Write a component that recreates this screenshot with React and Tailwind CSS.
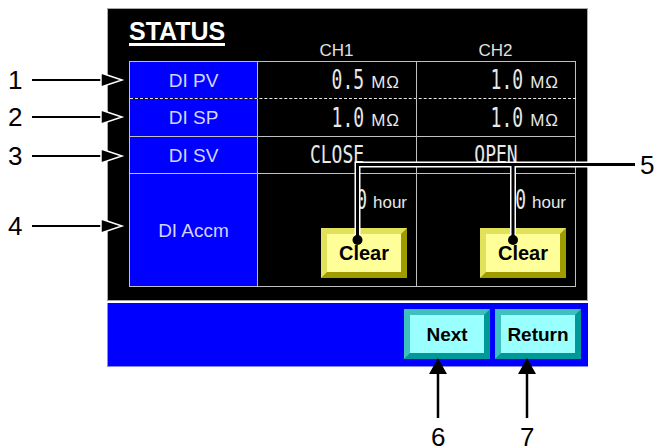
import React from "react";

const mono = "font-['DejaVu_Sans_Mono','Liberation_Mono',monospace]";

function Value({ v }) {
  return (
    <div className="flex items-end">
      <span className={`inline-block scale-y-150 ${mono} text-[18px] leading-[18px] text-[#e8e8e8]`}>{v}</span>
      <span className="ml-[7px] text-[17px] leading-[12px] tracking-[1px] text-[#e8e8e8]">MΩ</span>
    </div>
  );
}

function YellowBtn() {
  return (
    <div className="w-[86px] h-[50px] border-[6px] border-t-[#e2e25a] border-l-[#e2e25a] border-b-[#a09c00] border-r-[#a09c00] bg-[#ffff99] flex items-center justify-center">
      <span className="text-[20px] leading-none font-bold text-black">Clear</span>
    </div>
  );
}

function CyanBtn({ label }) {
  return (
    <div className="w-[86px] h-[50px] border-[6px] border-t-[#3ec0c0] border-l-[#3ec0c0] border-b-[#009999] border-r-[#009999] bg-[#99ffff] flex items-center justify-center">
      <span className="text-[19px] leading-none font-bold text-black">{label}</span>
    </div>
  );
}

function Label({ children }) {
  return (
    <div className="w-[128px] border-r border-[#c0c0c0] bg-[#0000ff] flex items-center justify-center text-[19px] leading-none text-[#d4d4ff]">
      {children}
    </div>
  );
}

function Accm() {
  return (
    <div className="w-[159px] border-r border-[#c0c0c0] flex flex-col items-end pr-[9px] pt-[17px]">
      <div className="flex items-end">
        <span className={`inline-block scale-y-150 ${mono} text-[18px] leading-[18px] text-[#e8e8e8]`}>0</span>
        <span className="ml-[6px] text-[17px] leading-[12px] text-[#e8e8e8]">hour</span>
      </div>
      <div className="mt-[19px]">
        <YellowBtn />
      </div>
    </div>
  );
}

export default function App() {
  return (
    <div className="relative w-[658px] h-[448px] bg-white overflow-hidden font-['Liberation_Sans',Arial,sans-serif]">
      <div className="pl-[107px] pt-[8px]">
        <div className="w-[481px] h-[293px] bg-black border border-[#a8a8a8] pl-[21px] pt-[11px]">
          <div className="flex h-[41px]">
            <div className="w-[128px]">
              <div className="w-fit text-white font-bold text-[25px] leading-[23px] border-b-[3px] border-white">STATUS</div>
            </div>
            <div className="w-[159px] flex items-end justify-center pb-[2px] text-[17px] leading-[17px] text-[#e0e0e0]">CH1</div>
            <div className="w-[159px] flex items-end justify-center pb-[2px] text-[17px] leading-[17px] text-[#e0e0e0]">CH2</div>
          </div>
          <div className="w-[447px] border-l border-t border-[#c0c0c0]">
            <div className="flex h-[37px] border-b border-dashed border-b-[#e8e8e8]">
              <Label>DI PV</Label>
              <div className="w-[159px] border-r border-[#c0c0c0] flex items-center justify-end pr-[16px]"><Value v="0.5" /></div>
              <div className="w-[159px] border-r border-[#c0c0c0] flex items-center justify-end pr-[16px]"><Value v="1.0" /></div>
            </div>
            <div className="flex h-[38px] border-b border-[#c0c0c0]">
              <Label>DI SP</Label>
              <div className="w-[159px] border-r border-[#c0c0c0] flex items-center justify-end pr-[16px]"><Value v="1.0" /></div>
              <div className="w-[159px] border-r border-[#c0c0c0] flex items-center justify-end pr-[16px]"><Value v="1.0" /></div>
            </div>
            <div className="flex h-[37px] border-b border-[#c0c0c0]">
              <Label>DI SV</Label>
              <div className="w-[159px] border-r border-[#c0c0c0] flex items-center justify-center">
                <span className={`inline-block scale-y-140 ${mono} text-[18px] leading-[18px] text-[#e8e8e8]`}>CLOSE</span>
              </div>
              <div className="w-[159px] border-r border-[#c0c0c0] flex items-center justify-center">
                <span className={`inline-block scale-y-140 ${mono} text-[18px] leading-[18px] text-[#e8e8e8]`}>OPEN</span>
              </div>
            </div>
            <div className="flex h-[113px] border-b border-[#c0c0c0]">
              <Label>DI Accm</Label>
              <Accm />
              <Accm />
            </div>
          </div>
        </div>
        <div className="mt-[2px] w-[481px] h-[64px] bg-[#0000ff] border-l border-b border-[#8888ff] flex justify-end items-start gap-[5px] pt-[6px] pr-[7px]">
          <CyanBtn label="Next" />
          <CyanBtn label="Return" />
        </div>
      </div>

      <svg className="absolute left-0 top-0 pointer-events-none" width="658" height="448" viewBox="0 0 658 448">
        {[80, 117, 156, 226].map((y) => (
          <g key={y}>
            <line x1="32" y1={y} x2="104" y2={y} stroke="#000" strokeWidth="2" />
            <polygon points={`101,${y - 7} 122,${y} 101,${y + 7}`} fill="#000" stroke="#fff" strokeWidth="1.5" />
          </g>
        ))}
        <path d="M357.5 240 V164.5 H635 M513 164.5 V240" fill="none" stroke="#fff" strokeWidth="6" />
        <path d="M357.5 240 V164.5 H635 M513 164.5 V240" fill="none" stroke="#000" strokeWidth="3" />
        <circle cx="357.5" cy="240" r="5" fill="#000" />
        <circle cx="513" cy="240" r="5" fill="#000" />
        <line x1="438" y1="418" x2="438" y2="372" stroke="#000" strokeWidth="2.5" />
        <polygon points="429,374 438,358 447,374" fill="#000" />
        <line x1="527" y1="418" x2="527" y2="372" stroke="#000" strokeWidth="2.5" />
        <polygon points="518,374 527,358 536,374" fill="#000" />
      </svg>

      <div className="absolute left-[8px] top-[67px] text-[26px] leading-[26px] text-black">1</div>
      <div className="absolute left-[8px] top-[104px] text-[26px] leading-[26px] text-black">2</div>
      <div className="absolute left-[8px] top-[143px] text-[26px] leading-[26px] text-black">3</div>
      <div className="absolute left-[8px] top-[213px] text-[26px] leading-[26px] text-black">4</div>
      <div className="absolute left-[640px] top-[152px] text-[26px] leading-[26px] text-black">5</div>
      <div className="absolute left-[431px] top-[424px] text-[26px] leading-[26px] text-black">6</div>
      <div className="absolute left-[520px] top-[424px] text-[26px] leading-[26px] text-black">7</div>
    </div>
  );
}
